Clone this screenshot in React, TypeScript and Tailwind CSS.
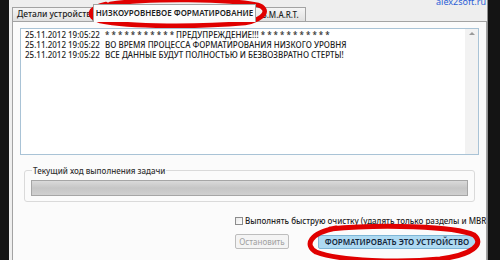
const logLines = [
  ["25.11.2012 19:05:22", "* * * * * * * * * * * ПРЕДУПРЕЖДЕНИЕ!!! * * * * * * * * * * *"],
  ["25.11.2012 19:05:22", "ВО ВРЕМЯ ПРОЦЕССА ФОРМАТИРОВАНИЯ НИЗКОГО УРОВНЯ"],
  ["25.11.2012 19:05:22", "ВСЕ ДАННЫЕ БУДУТ ПОЛНОСТЬЮ И БЕЗВОЗВРАТНО СТЕРТЫ!"],
];

export default function App() {
  return (
    <div className="relative flex h-[260px] w-[500px] overflow-hidden bg-[#121212] font-['Noto_Sans','Open_Sans',sans-serif] text-[#1e1e1e]">
      <div className="w-[9px] shrink-0 bg-[#141414]" />
      <div className="flex w-[478px] shrink-0 flex-col bg-[#eeeeee]">
        {/* tabs */}
        <div className="flex h-[21px] items-end pl-[3px]">
          <div className="flex h-[14px] w-[81px] items-center border border-b-0 border-[#a3a3a3] bg-gradient-to-b from-[#f5f5f5] to-[#e0e0e0] pl-[4px] text-[8.5px] font-medium leading-none whitespace-nowrap">
            Детали устройства
          </div>
          <div className="relative z-10 -mb-px flex h-[18px] w-[163px] items-center justify-center border border-b-0 border-[#a3a3a3] bg-[#fcfcfc] pb-[2px] text-[8px] font-semibold leading-none whitespace-nowrap">
            НИЗКОУРОВНЕВОЕ ФОРМАТИРОВАНИЕ
          </div>
          <div className="flex h-[14px] w-[50px] items-center justify-center border border-b-0 border-l-0 border-[#a3a3a3] bg-gradient-to-b from-[#f5f5f5] to-[#e0e0e0] text-[8px] font-medium leading-none whitespace-nowrap">
            S.M.A.R.T.
          </div>
        </div>

        {/* panel */}
        <div className="ml-[3px] flex flex-1 flex-col overflow-hidden border border-b-0 border-[#a3a3a3] bg-[#fbfbfb] px-[7px] pt-[6px]">
          <div className="flex h-[127px] border border-[#a9c3d6] bg-white">
            <div className="flex-1 pl-[4px] pt-[1px]">
              {logLines.map(([date, msg], i) => (
                <div key={i} className="flex h-[10px] items-center text-[8px] font-medium leading-none whitespace-nowrap">
                  <span className="w-[80px] shrink-0">{date}</span>
                  <span>{msg}</span>
                </div>
              ))}
            </div>
            <div className="flex w-[13px] flex-col items-center bg-[#f2f2f2] pt-[3px]">
              <div className="h-0 w-0 border-x-[3px] border-b-[3px] border-x-transparent border-b-[#9a9a9a]" />
            </div>
          </div>

          <fieldset className="mx-[4px] mt-[11px] rounded-[3px] border border-[#dadada] px-[6px] pb-[5px] pt-[5px]">
            <legend className="ml-[1px] px-[1px] text-[8px] font-medium leading-[9px] text-[#333]">
              Текущий ход выполнения задачи
            </legend>
            <div className="h-[16px] border border-[#a6a6a6] bg-gradient-to-b from-[#dadada] via-[#c6c6c6] to-[#d0d0d0]" />
          </fieldset>

          <div className="mt-[15px] flex items-center pl-[215px] whitespace-nowrap">
            <div className="h-[8px] w-[8px] shrink-0 border border-[#8c8c8c] bg-gradient-to-br from-[#e8e8e8] to-white" />
            <span className="ml-[2px] text-[8px] font-medium leading-none">
              Выполнять быструю очистку (удалять только разделы и MBR)
            </span>
          </div>

          <div className="mt-[9px] flex items-center pl-[215px]">
            <div className="flex h-[15px] w-[54px] items-center justify-center rounded-[2px] border border-[#bdbdbd] bg-[#f4f4f4] text-[8px] leading-none text-[#a0a0a0]">
              Остановить
            </div>
            <div className="ml-[29px] flex h-[14px] w-[158px] items-center justify-center rounded-[2px] border border-[#7fb6d6] bg-[#aedaf2] text-[8px] font-semibold leading-none whitespace-nowrap text-[#15263a]">
              ФОРМАТИРОВАТЬ ЭТО УСТРОЙСТВО
            </div>
          </div>
        </div>
      </div>
      <div className="flex-1 border-l border-[#8f8f8f] bg-[#141414]" />

      <span className="absolute right-[14px] top-[-3px] text-[9px] leading-[10px] text-[#2c5fd6]">alex2soft.ru</span>

      <svg className="pointer-events-none absolute inset-0" width="500" height="260" viewBox="0 0 500 260">
        <path
          d="M110 4 C 150 -2, 230 -1, 258 5 C 270 9, 266 19, 245 23 C 200 27, 130 27, 100 21 C 86 17, 88 8, 106 4"
          fill="none"
          stroke="#e00000"
          strokeWidth="4.5"
          strokeLinecap="round"
        />
        <path
          d="M330 229 C 380 224, 455 226, 474 235 C 485 244, 472 255, 440 259 C 400 263, 340 261, 316 252 C 304 245, 310 233, 336 228"
          fill="none"
          stroke="#e00000"
          strokeWidth="5"
          strokeLinecap="round"
        />
      </svg>
    </div>
  );
}
